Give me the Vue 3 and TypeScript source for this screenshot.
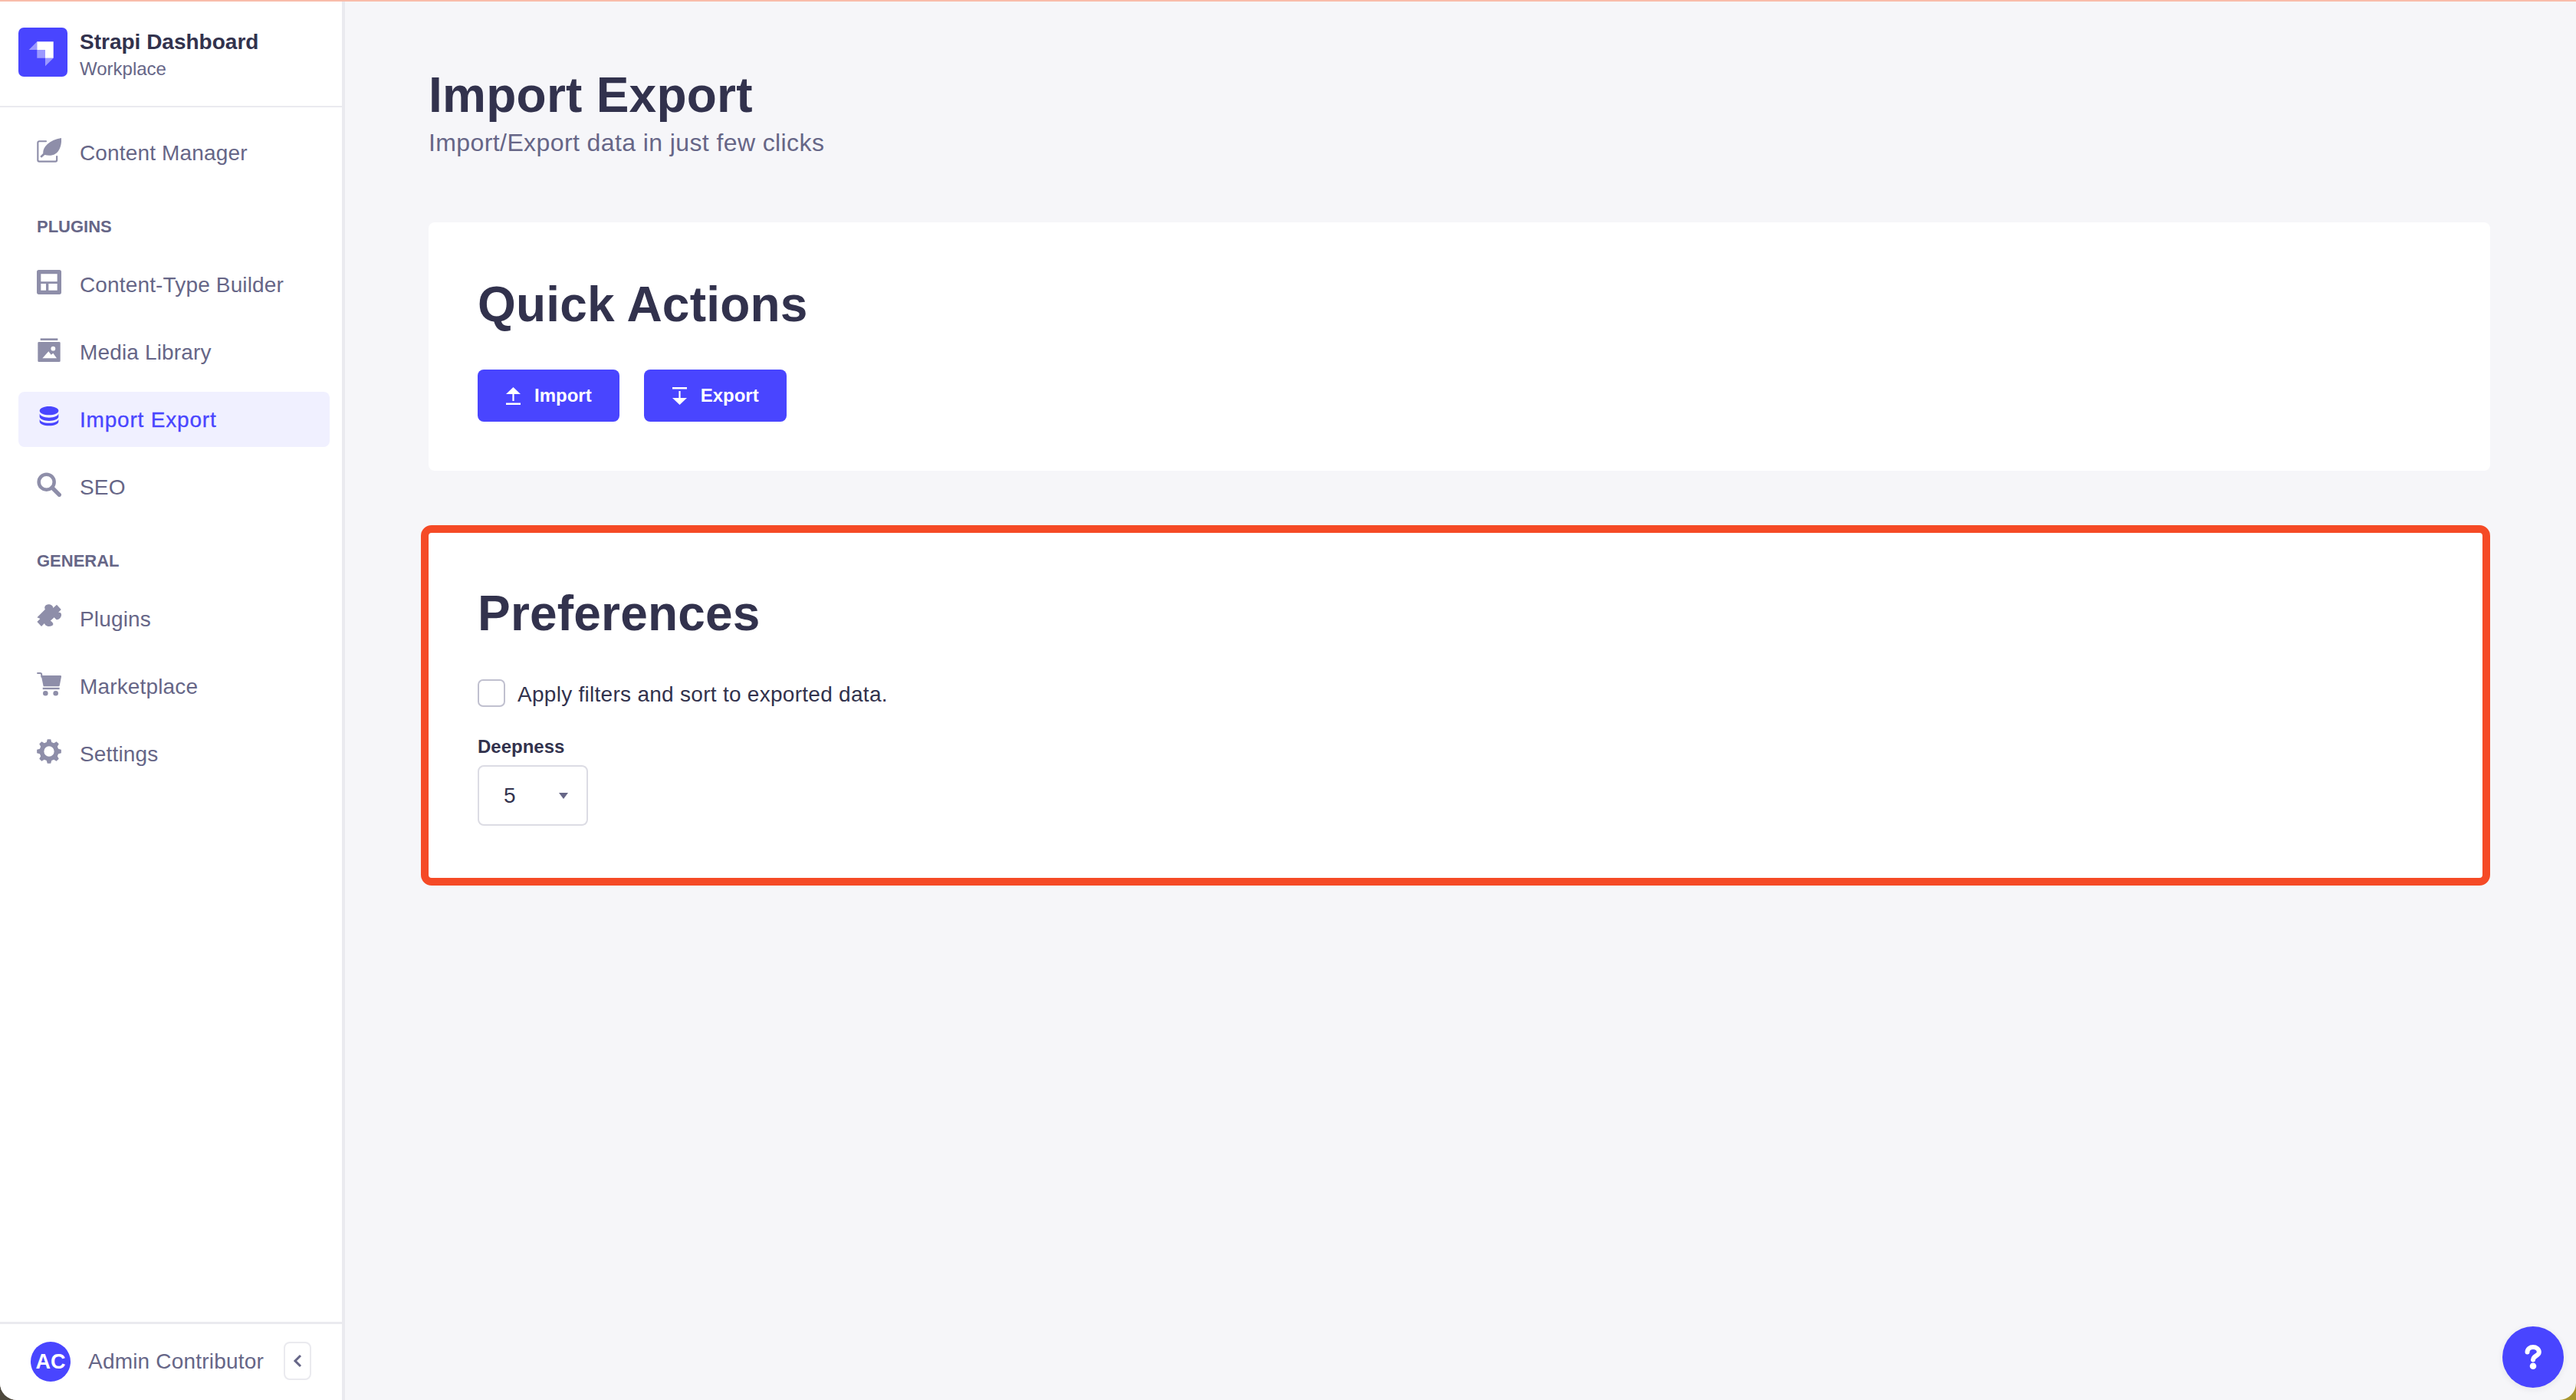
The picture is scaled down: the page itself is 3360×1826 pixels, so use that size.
<script setup lang="ts">
interface IconPart {
  d: string
  stroke?: number
}

interface NavItem {
  label: string
  icon: string
  active?: boolean
}

interface NavSection {
  title?: string
  items: NavItem[]
}

// eight rounded-off teeth round a punched hole
function gearPath(): string {
  const at = (r: number, deg: number) => {
    const a = ((deg - 90) * Math.PI) / 180
    return `${(12 + r * Math.cos(a)).toFixed(2)} ${(12 + r * Math.sin(a)).toFixed(2)}`
  }
  let d = ''
  for (let i = 0; i < 8; i++) {
    const c = i * 45
    d += `${i === 0 ? 'M' : 'L'}${at(9.4, c - 15)}L${at(12, c - 8)}L${at(12, c + 8)}L${at(9.4, c + 15)}`
  }
  return `${d}zM12 7a5 5 0 1 0 0 10 5 5 0 0 0 0-10z`
}

const icons: Record<string, IconPart[]> = {
  write: [
    { d: 'M9 3.2H2.4A1.4 1.4 0 0 0 1 4.6v17A1.4 1.4 0 0 0 2.4 23h15.8a1.4 1.4 0 0 0 1.4-1.4V18', stroke: 1.6 },
    { d: 'M24 0c.4 6-1.2 12.5-6 15.6-2.6 1.7-6.8 1.9-10.2.9L4.6 19.4 3.2 18l3-3C5.6 9.4 11.5 2 24 0z' },
  ],
  layout: [
    { d: 'M2 0h20a2 2 0 0 1 2 2v20a2 2 0 0 1-2 2H2a2 2 0 0 1-2-2V2a2 2 0 0 1 2-2zM4 4v7.5h16V4zM4 13.5V20h5v-6.5zM11.5 13.5V20H20v-6.5z' },
  ],
  media: [
    { d: 'M3.5 1h17v2h-17z' },
    { d: 'M2 4.5h20a1 1 0 0 1 1 1V23a1 1 0 0 1-1 1H2a1 1 0 0 1-1-1V5.5a1 1 0 0 1 1-1zM16 8.8a2.2 2.2 0 1 0 0 4.4 2.2 2.2 0 0 0 0-4.4zM5.5 20.5h14L16 15.5l-2 1.6-2.5-3.4z' },
  ],
  database: [
    { d: 'M12 1.5c5.1 0 9.25 1.9 9.25 4.25S17.1 10 12 10 2.75 8.1 2.75 5.75 6.9 1.5 12 1.5z' },
    { d: 'M2.75 8.5c0 2.2 4.1 4 9.25 4s9.25-1.8 9.25-4v3.2c0 2.2-4.1 4-9.25 4s-9.25-1.8-9.25-4z' },
    { d: 'M2.75 13.8c0 2.2 4.1 4 9.25 4s9.25-1.8 9.25-4v2.7c0 2.2-4.1 4-9.25 4s-9.25-1.8-9.25-4z' },
  ],
  search: [
    { d: 'M9.5 2a7.5 7.5 0 1 0 0 15 7.5 7.5 0 0 0 0-15z', stroke: 3.4 },
    { d: 'M15 15l7 7', stroke: 4 },
  ],
  puzzle: [
    { d: 'M.3 13L8.2 5C7 3.3 7.8.8 10.5.3c2.6-.4 5.5.8 5.5 3.5L19.5.5l4.3 4.7-2.8 3c1.8-.3 3.2.5 3 2.5-.2 2.7-2.8 5-5 4.3L17 13l-3.7 3.4c1.500.8 3 2.300 2.700 3.300-.3 1.600-2.800 2.300-5 2-1.600-.2-3.500-1.700-3.500-2.900l-3 3L.3 17.300l3-3z' },
  ],
  cart: [
    { d: 'M.8 1.5h2.4a1.5 1.5 0 0 1 1.5 1.5v2', stroke: 1.5 },
    { d: 'M4.3 3.7H23a1 1 0 0 1 1 1.2l-1.7 8.8a1 1 0 0 1-1 .8H6.5z' },
    { d: 'M5.8 15.6h16.4v1.8H5.8z' },
    { d: 'M8.5 18.7a2.5 2.5 0 1 0 0 5 2.5 2.5 0 0 0 0-5zM18.5 18.7a2.5 2.5 0 1 0 0 5 2.5 2.5 0 0 0 0-5z' },
  ],
  gear: [{ d: gearPath() }],
}

const sections: NavSection[] = [
  { items: [{ label: 'Content Manager', icon: 'write' }] },
  {
    title: 'Plugins',
    items: [
      { label: 'Content-Type Builder', icon: 'layout' },
      { label: 'Media Library', icon: 'media' },
      { label: 'Import Export', icon: 'database', active: true },
      { label: 'SEO', icon: 'search' },
    ],
  },
  {
    title: 'General',
    items: [
      { label: 'Plugins', icon: 'puzzle' },
      { label: 'Marketplace', icon: 'cart' },
      { label: 'Settings', icon: 'gear' },
    ],
  },
]
</script>

<template>
  <div class="desktop">
    <div class="window">
      <aside class="sidebar">
        <header class="brand">
          <svg class="logo" viewBox="0 0 64 64">
            <rect width="64" height="64" rx="7" fill="#4945ff" />
            <path d="M24.3 18.3h21.4v21.400H35V29H24.300z" fill="#fff" />
            <path d="M13.700 29l10.600-10.700V29zM24.300 29H35v10.700H24.300zM35 39.700h10.700L35 50.300z" fill="#fff" opacity=".45" />
          </svg>
          <div class="brand-text">
            <div class="brand-name">Strapi Dashboard</div>
            <div class="brand-sub">Workplace</div>
          </div>
        </header>

        <nav class="nav">
          <section v-for="(section, i) in sections" :key="i" class="nav-section">
            <h3 v-if="section.title" class="nav-title">{{ section.title }}</h3>
            <ul class="nav-list">
              <li v-for="item in section.items" :key="item.label" class="nav-item" :class="{ active: item.active }">
                <svg class="nav-icon" viewBox="0 0 24 24">
                  <path
                    v-for="(part, j) in icons[item.icon]"
                    :key="j"
                    :d="part.d"
                    :fill="part.stroke ? 'none' : 'currentColor'"
                    :stroke="part.stroke ? 'currentColor' : 'none'"
                    :stroke-width="part.stroke"
                    stroke-linecap="round"
                    fill-rule="evenodd"
                  />
                </svg>
                <span class="nav-label">{{ item.label }}</span>
              </li>
            </ul>
          </section>
        </nav>

        <footer class="user">
          <span class="avatar">AC</span>
          <span class="user-name">Admin Contributor</span>
          <button class="collapse" type="button" aria-label="Collapse">
            <svg width="12" height="20" viewBox="0 0 12 20">
              <path d="M10 3L3 10l7 7" fill="none" stroke="#666687" stroke-width="3" />
            </svg>
          </button>
        </footer>
      </aside>

      <main class="main">
        <h1 class="page-title">Import Export</h1>
        <p class="page-sub">Import/Export data in just few clicks</p>

        <section class="card quick">
          <h2 class="card-title">Quick Actions</h2>
          <div class="actions">
            <button class="btn" type="button">
              <svg width="19" height="23" viewBox="0 0 19 23" fill="#fff">
                <path d="M9.5 0L19 9h-8.400v9H8.400V9H0zM0 20.400h19V23H0z" />
              </svg>
              Import
            </button>
            <button class="btn" type="button">
              <svg width="19" height="23" viewBox="0 0 19 23" fill="#fff">
                <path d="M0 0h19v2.600H0zM8.400 5h2.200v9H19l-9.500 9L0 14h8.400z" />
              </svg>
              Export
            </button>
          </div>
        </section>

        <section class="card prefs">
          <h2 class="card-title">Preferences</h2>
          <label class="check">
            <input type="checkbox" />
            <span>Apply filters and sort to exported data.</span>
          </label>
          <div class="field-label">Deepness</div>
          <div class="select">
            <span>5</span>
            <i class="caret" />
          </div>
        </section>
      </main>

      <button class="help" type="button" aria-label="Help">
        <svg width="22" height="32" viewBox="0 0 22 32">
          <path d="M3.5 9.5C3.5 5.5 7 3 11 3s7.800 2.500 7.800 6.500c0 5-7.800 4.800-7.800 10" fill="none" stroke="#fff" stroke-width="6" stroke-linecap="round" />
          <circle cx="11" cy="27.700" r="4.300" fill="#fff" />
        </svg>
      </button>
    </div>
  </div>
</template>

<style>
body {
  margin: 0;
}
</style>

<style scoped>
.desktop {
  height: 1826px;
  background: linear-gradient(to right, #4d483c 50%, #a8962e 50%);
  font-family: "Liberation Sans", Arial, sans-serif;
  color: #32324d;
}

.window {
  position: relative;
  display: flex;
  height: 100%;
  box-sizing: border-box;
  overflow: hidden;
  border-top: 2px solid #f9bcaa;
  border-radius: 0 0 22px 22px;
  background: #f6f6f9;
}

.sidebar {
  display: flex;
  flex-direction: column;
  flex: none;
  width: 450px;
  box-sizing: border-box;
  border-right: 4px solid #eaeaef;
  background: #fff;
}

.brand {
  display: flex;
  align-items: center;
  gap: 16px;
  height: 138px;
  box-sizing: border-box;
  padding: 0 24px 4px;
  border-bottom: 2px solid #eaeaef;
}

.logo {
  width: 64px;
  height: 64px;
}

.brand-text {
  padding-top: 8px;
}

.brand-name {
  font-size: 28px;
  line-height: 36px;
  font-weight: 700;
}

.brand-sub {
  font-size: 24px;
  line-height: 34px;
  color: #666687;
}

.nav {
  padding: 23px 16px 0 24px;
}

.nav-title {
  margin: 47px 0 25px 24px;
  font-size: 22px;
  line-height: 28px;
  font-weight: 700;
  text-transform: uppercase;
  color: #666687;
}

.nav-list {
  display: flex;
  flex-direction: column;
  gap: 16px;
  margin: 0;
  padding: 0;
  list-style: none;
}

.nav-item {
  display: flex;
  align-items: center;
  gap: 24px;
  height: 72px;
  padding-left: 24px;
  border-radius: 8px;
  font-size: 28px;
  letter-spacing: 0.15px;
  color: #666687;
}

.nav-label {
  padding-top: 2px;
}

.nav-icon {
  flex: none;
  width: 32px;
  height: 32px;
  margin-top: -6px;
  color: #8e8ea9;
}

.nav-item.active {
  background: #f0f0ff;
  color: #4945ff;
  letter-spacing: 0.8px;
  -webkit-text-stroke: 0.3px #4945ff;
}

.nav-item.active .nav-icon {
  color: #4945ff;
}

.user {
  display: flex;
  align-items: flex-start;
  margin-top: auto;
  height: 102px;
  box-sizing: border-box;
  padding: 23px 40px 0;
  border-top: 3px solid #eaeaef;
}

.avatar {
  display: flex;
  flex: none;
  align-items: center;
  justify-content: center;
  width: 52px;
  height: 52px;
  border-radius: 50%;
  background: #4945ff;
  color: #fff;
  font-size: 27px;
  font-weight: 700;
}

.user-name {
  margin-left: 23px;
  font-size: 28px;
  line-height: 52px;
  letter-spacing: 0.2px;
  white-space: nowrap;
  color: #666687;
}

.collapse {
  display: flex;
  flex: none;
  align-items: center;
  justify-content: center;
  width: 36px;
  height: 50px;
  margin-left: auto;
  padding: 0;
  border: 2px solid #eaeaef;
  border-radius: 8px;
  background: #fff;
}

.main {
  flex: 1;
  min-width: 0;
  padding: 83px 112px 0 109px;
}

.page-title {
  margin: 0;
  font-size: 64px;
  line-height: 79px;
  font-weight: 700;
  letter-spacing: 0.25px;
}

.page-sub {
  margin: 2px 0 84px;
  font-size: 32px;
  line-height: 40px;
  letter-spacing: 0.4px;
  color: #666687;
}

.card {
  position: relative;
  border-radius: 8px;
  background: #fff;
}

.quick {
  height: 324px;
  box-sizing: border-box;
  padding: 69px 64px 0;
}

.card-title {
  margin: 0;
  font-size: 64px;
  line-height: 76px;
  font-weight: 700;
  letter-spacing: 0.2px;
}

.actions {
  display: flex;
  gap: 32px;
  margin-top: 47px;
}

.btn {
  display: flex;
  align-items: center;
  gap: 18px;
  height: 68px;
  box-sizing: border-box;
  padding: 0 36px 0 37px;
  border: 0;
  border-radius: 8px;
  background: #4945ff;
  color: #fff;
  font: 700 24px "Liberation Sans", Arial, sans-serif;
}

.prefs {
  margin-top: 78px;
  height: 458px;
  box-sizing: border-box;
  padding: 70px 64px 0;
}

/* red annotation frame drawn over the card */
.prefs::after {
  content: "";
  position: absolute;
  top: -7px;
  right: 0;
  bottom: -5px;
  left: -10px;
  border: 10px solid #f54a26;
  border-radius: 14px;
  pointer-events: none;
}

.check {
  display: flex;
  align-items: center;
  gap: 16px;
  margin-top: 48px;
  font-size: 28px;
  line-height: 36px;
  letter-spacing: 0.28px;
}

.check input {
  appearance: none;
  flex: none;
  width: 36px;
  height: 36px;
  margin: 0;
  box-sizing: border-box;
  border: 2px solid #c0c0cf;
  border-radius: 7px;
  background: #fff;
}

.check span {
  position: relative;
  top: 2px;
}

.field-label {
  margin-top: 38px;
  font-size: 24px;
  line-height: 28px;
  font-weight: 700;
}

.select {
  display: flex;
  align-items: center;
  justify-content: space-between;
  width: 144px;
  height: 79px;
  box-sizing: border-box;
  margin-top: 10px;
  padding: 0 24px 0 32px;
  border: 2px solid #dcdce4;
  border-radius: 8px;
  font-size: 28px;
}

.caret {
  width: 0;
  height: 0;
  border-top: 8px solid #666687;
  border-right: 6px solid transparent;
  border-left: 6px solid transparent;
}

.help {
  position: absolute;
  right: 16px;
  bottom: 16px;
  display: flex;
  align-items: center;
  justify-content: center;
  width: 80px;
  height: 80px;
  padding: 0;
  border: 0;
  border-radius: 50%;
  background: #4945ff;
  box-shadow: 0 2px 8px rgba(33, 33, 52, 0.08);
}
</style>
